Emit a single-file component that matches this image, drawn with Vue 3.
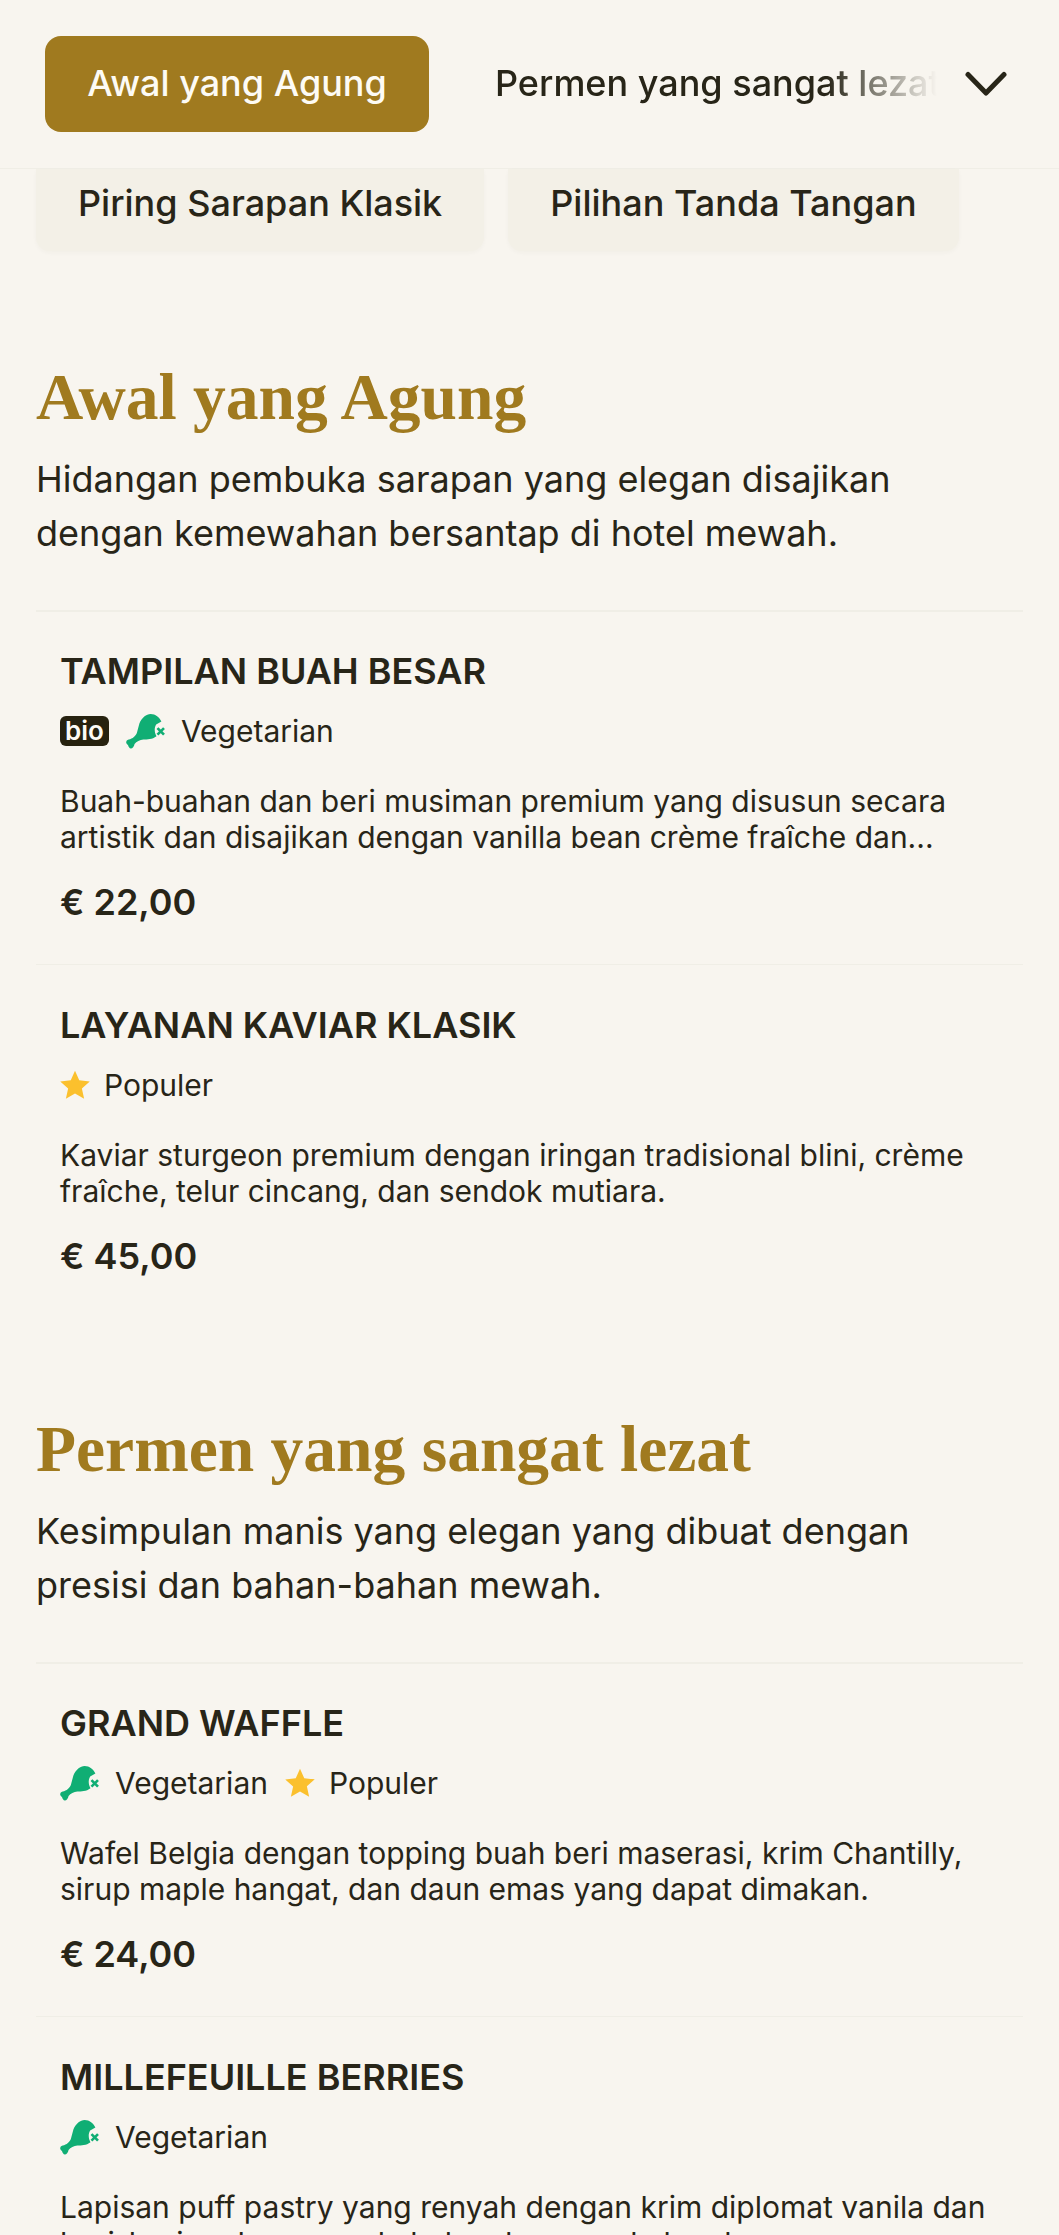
<script setup>
const sections = [
  {
    title: 'Awal yang Agung',
    desc: ['Hidangan pembuka sarapan yang elegan disajikan', 'dengan kemewahan bersantap di hotel mewah.'],
    items: [
      { name: 'TAMPILAN BUAH BESAR', tags: ['bio', 'veg'], lines: ['Buah-buahan dan beri musiman premium yang disusun secara', 'artistik dan disajikan dengan vanilla bean crème fraîche dan...'], price: '€ 22,00' },
      { name: 'LAYANAN KAVIAR KLASIK', tags: ['pop'], lines: ['Kaviar sturgeon premium dengan iringan tradisional blini, crème', 'fraîche, telur cincang, dan sendok mutiara.'], price: '€ 45,00' },
    ],
  },
  {
    title: 'Permen yang sangat lezat',
    desc: ['Kesimpulan manis yang elegan yang dibuat dengan', 'presisi dan bahan-bahan mewah.'],
    items: [
      { name: 'GRAND WAFFLE', tags: ['veg', 'pop'], lines: ['Wafel Belgia dengan topping buah beri maserasi, krim Chantilly,', 'sirup maple hangat, dan daun emas yang dapat dimakan.'], price: '€ 24,00' },
      { name: 'MILLEFEUILLE BERRIES', tags: ['veg'], lines: ['Lapisan puff pastry yang renyah dengan krim diplomat vanila dan', 'beri-berian dengan gula halus dan saus kelopak mawar.'], price: '' },
    ],
  },
]
</script>

<template>
  <div class="page">
    <header class="top">
      <button class="active">Awal yang Agung</button>
      <span class="next">Permen yang sangat lezat</span>
      <svg class="chev" viewBox="0 0 42 26" fill="none"><path d="M3 3.5 L21 22 L39 3.5" stroke="#282518" stroke-width="5" stroke-linecap="round" stroke-linejoin="round"/></svg>
    </header>
    <div class="chips">
      <div class="chip">Piring Sarapan Klasik</div>
      <div class="chip">Pilihan Tanda Tangan</div>
    </div>
    <section v-for="s in sections" :key="s.title" class="sec">
      <h2>{{ s.title }}</h2>
      <p class="lead"><span v-for="l in s.desc" :key="l">{{ l }}</span></p>
      <article v-for="it in s.items" :key="it.name" class="item">
        <h3>{{ it.name }}</h3>
        <div class="tags">
          <template v-for="t in it.tags" :key="t">
            <span v-if="t === 'bio'" class="bio">bio</span>
            <span v-else-if="t === 'veg'" class="tag">
              <svg class="leg" viewBox="0 0 125 107">
                <path fill="#10ae74" d="M41 28C48 12 62 0 75 0C90 0 102 10 108 23L92 32C86 42 86 55 93 68C80 78 65 78 53 78C42 80 32 84 26 92C24 104 14 110 9 102C6 96 6 94 5 94C-2 90-1 80 8 78C20 76 30 66 33 58Z"/>
                <path stroke="#10ae74" stroke-width="8" d="M96 43L116 63M116 43L96 63"/>
              </svg>
              Vegetarian
            </span>
            <span v-else class="tag">
              <svg class="star" viewBox="0 0 24 24"><path fill="#fbc02d" d="M12 .5l3.4 7.7 8.4.9-6.3 5.6 1.8 8.3-7.3-4.2-7.3 4.2 1.8-8.3-6.3-5.6 8.4-.9z"/></svg>
              Populer
            </span>
          </template>
        </div>
        <p class="text"><span v-for="l in it.lines" :key="l">{{ l }}</span></p>
        <div v-if="it.price" class="price">{{ it.price }}</div>
      </article>
    </section>
  </div>
</template>

<style>
body { background: #f8f5ef; }
</style>
<style scoped>
.page {
  width: 1059px;
  height: 2235px;
  overflow: hidden;
  background: #f8f5ef;
  color: #282518;
  font-family: Inter, "Liberation Sans", sans-serif;
}
.top {
  height: 168px;
  display: flex;
  align-items: center;
  padding-left: 45px;
  border-bottom: 1px solid #f0eee6;
}
.active {
  width: 384px;
  height: 96px;
  border: 0;
  border-radius: 16px;
  padding: 0 0 3px;
  background: #a07a1f;
  color: #fdfbf5;
  font: 500 36px Inter, sans-serif;
  flex: none;
}
.next {
  margin: 0 0 3px 66px;
  width: 442px;
  flex: none;
  font-size: 36px;
  font-weight: 500;
  white-space: nowrap;
  overflow: hidden;
  -webkit-mask-image: linear-gradient(90deg, #000 75%, transparent 100%);
  mask-image: linear-gradient(90deg, #000 75%, transparent 100%);
}
.chev { width: 42px; height: 26px; margin-left: 28px; flex: none; }
.chips {
  display: flex;
  gap: 24px;
  padding-left: 36px;
}
.chip {
  height: 82px;
  padding: 0 42px 14px;
  box-sizing: border-box;
  display: flex;
  align-items: center;
  background: #f3f0e7;
  border-radius: 0 0 14px 14px;
  box-shadow: 0 2px 4px rgba(60, 50, 20, 0.03);
  font-size: 36px;
  font-weight: 500;
}
.sec { margin: 0 36px; padding-top: 110px; }
.sec + .sec { padding-top: 95px; }
h2 {
  margin: 0;
  font: 700 65.5px/72px "Liberation Serif", serif;
  color: #a07a1f;
}
.lead {
  margin: 19px 0 0;
  font-size: 36px;
  line-height: 54px;
  padding-bottom: 50px;
  border-bottom: 2px solid #f0eee6;
}
.lead span, .text span { display: block; white-space: nowrap; }
.item { padding: 38px 24px 40px; border-bottom: 1px solid #f0eee6; }
.item:first-of-type { padding-top: 37px; }
.item:last-child { border-bottom: 0; }
h3 { margin: 0; font-size: 36px; font-weight: 600; line-height: 44px; }
.tags { display: flex; align-items: center; gap: 17px; margin-top: 16px; height: 44px; }
.tag { display: flex; align-items: center; gap: 14px; font-size: 30px; }
.bio {
  background: #27220f;
  color: #fdfbf5;
  font-size: 26px;
  font-weight: 600;
  padding: 0 5px;
  line-height: 30px;
  border-radius: 6px;
}
.leg { width: 41px; height: 35px; }
.star { width: 30px; height: 30px; }
.text { margin: 30px 0 0; font-size: 30px; line-height: 36px; }
.price { margin-top: 25px; font-size: 36px; font-weight: 600; line-height: 44px; }
</style>
